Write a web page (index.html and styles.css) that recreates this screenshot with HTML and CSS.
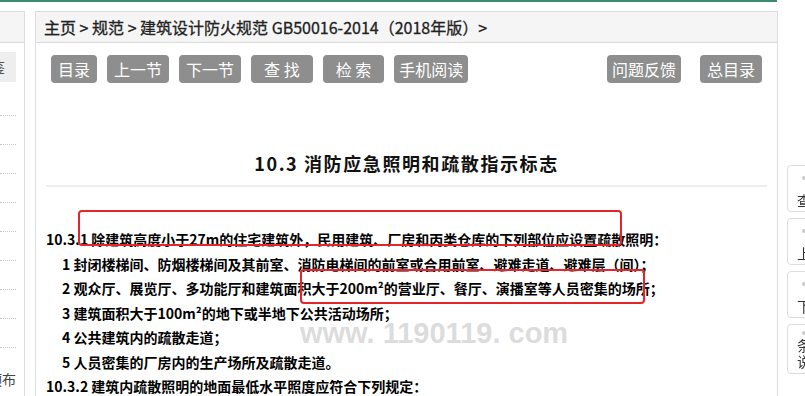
FILE: index.html
```
<!DOCTYPE html>
<html lang="zh-CN">
<head>
    <meta charset="UTF-8">
    <meta name="viewport" content="width=device-width, initial-scale=1.0">
    <title>10.3 消防应急照明和疏散指示标志</title>
    <link rel="stylesheet" href="styles.css">
</head>
<body>
    <div class="topline"></div>
    <div class="wrap">
        <aside class="side">
            <div class="side-head"></div>
            <div class="side-item active">鉴</div>
            <ul class="side-list">
                <li></li><li></li><li></li><li></li><li></li>
                <li></li><li></li><li></li><li></li>
                <li class="last"><span>颁布</span></li>
            </ul>
        </aside>

        <main class="main">
            <div class="crumb">主页 &gt; 规范 &gt; 建筑设计防火规范 GB50016-2014（2018年版）&gt;</div>

            <div class="toolbar">
                <a class="btn">目录</a>
                <a class="btn">上一节</a>
                <a class="btn">下一节</a>
                <a class="btn spaced">查 找</a>
                <a class="btn spaced">检 索</a>
                <a class="btn tight">手机阅读</a>
                <div class="toolbar-right">
                    <a class="btn tight">问题反馈</a>
                    <a class="btn">总目录</a>
                </div>
            </div>

            <div class="content">
                <h1 class="title">10.3 消防应急照明和疏散指示标志</h1>

                <div class="article">
                    <p>10.3.1 除建筑高度小于27m的住宅建筑外，民用建筑、厂房和丙类仓库的下列部位应设置疏散照明：</p>
                    <p class="sub">1 封闭楼梯间、防烟楼梯间及其前室、消防电梯间的前室或合用前室、避难走道、避难层（间）；</p>
                    <p class="sub">2 观众厅、展览厅、多功能厅和建筑面积大于200m²的营业厅、餐厅、演播室等人员密集的场所；</p>
                    <p class="sub">3 建筑面积大于100m²的地下或半地下公共活动场所；</p>
                    <p class="sub">4 公共建筑内的疏散走道；</p>
                    <p class="sub">5 人员密集的厂房内的生产场所及疏散走道。</p>
                    <p>10.3.2 建筑内疏散照明的地面最低水平照度应符合下列规定：</p>

                    <div class="mark mark-1"></div>
                    <div class="mark mark-2"></div>
                    <div class="watermark">www. 1190119. com</div>
                </div>
            </div>
        </main>
    </div>

    <div class="float-tabs">
        <div class="tab"><i></i>查找</div>
        <div class="tab"><i></i>上一节</div>
        <div class="tab"><i></i>下一节</div>
        <div class="tab two"><i></i>条文<br>说明</div>
    </div>
</body>
</html>
```

FILE: styles.css
```
body {
    margin: 0;
    background: #fff;
    font-family: "Noto Sans CJK SC", "Liberation Sans", sans-serif;
    color: #222;
    overflow: hidden;
}
.topline {
    width: 777px;
    height: 2px;
    background: #3d8b6f;
}
.wrap {
    display: flex;
    gap: 10px;
    margin-top: 9px;
}

/* left column, mostly scrolled off */
.side {
    width: 24px;
    height: 385px;
    border-top: 1px solid #ddd;
    border-right: 1px solid #ddd;
    flex-shrink: 0;
    overflow: hidden;
}
.side-head {
    height: 30px;
    background: #f5f5f5;
    border-bottom: 1px solid #ddd;
}
.side-item {
    margin-top: 9px;
    width: 16px;
    height: 30px;
    line-height: 30px;
    background: #eee;
    overflow: hidden;
    white-space: nowrap;
    text-indent: -10px;
    font-size: 15px;
    color: #555;
}
.side-list {
    list-style: none;
    margin: 0;
    padding: 5px 0 0;
    width: 16px;
}
.side-list li {
    height: 29px;
    border-bottom: 1px dotted #c8c8c8;
    box-sizing: border-box;
}
.side-list li.last {
    border-bottom: none;
    height: 40px;
    padding-top: 21px;
    text-indent: -12px;
    font-size: 14px;
    color: #444;
    white-space: nowrap;
    overflow: hidden;
}

/* main panel */
.main {
    width: 741px;
    border: 1px solid #ddd;
    border-bottom: none;
    flex-shrink: 0;
}
.crumb {
    height: 30px;
    line-height: 30px;
    padding-left: 8px;
    background: #f5f5f5;
    border-bottom: 1px solid #ddd;
    font-size: 16px;
    color: #222;
    white-space: nowrap;
    -webkit-text-stroke: 0.3px #222;
}
.toolbar {
    display: flex;
    gap: 10px;
    margin-top: 12px;
    padding: 0 15px;
}
.toolbar-right {
    display: flex;
    gap: 19px;
    margin-left: auto;
}
.btn {
    display: block;
    height: 28px;
    line-height: 28px;
    padding: 0 7px;
    background: #8e8e8e;
    color: #fff;
    font-size: 16px;
    border-radius: 4px;
    white-space: pre;
}
.btn.spaced {
    padding: 0 13px;
}
.btn.tight {
    padding: 0 5px;
}

.content {
    padding: 0 10px;
}
.title {
    margin: 68px 0 0;
    padding-bottom: 10px;
    border-bottom: 2px solid #eee;
    text-align: center;
    font-size: 18px;
    line-height: 24px;
    letter-spacing: 1.6px;
    color: #111;
}
.article {
    position: relative;
    margin-top: 40px;
    font-size: 14px;
    font-weight: bold;
    color: #000;
}
.article p {
    margin: 0;
    line-height: 24.5px;
    white-space: nowrap;
}
.article p.sub {
    padding-left: 16px;
}

/* red annotation boxes drawn over the text */
.mark {
    position: absolute;
    border: 2px solid #e4262a;
    border-radius: 4px;
}
.mark-1 {
    left: 32px;
    top: -17px;
    width: 540px;
    height: 32px;
}
.mark-2 {
    left: 254px;
    top: 42px;
    width: 341px;
    height: 31px;
}
.watermark {
    position: absolute;
    left: 254px;
    top: 90px;
    font-family: "Liberation Sans", sans-serif;
    font-size: 29px;
    color: rgba(190, 190, 190, 0.55);
    white-space: nowrap;
}

/* floating side tabs */
.float-tabs {
    position: fixed;
    left: 787px;
    top: 165px;
    display: flex;
    flex-direction: column;
    gap: 6px;
}
.tab {
    width: 40px;
    height: 47px;
    border: 1px solid #ddd;
    border-radius: 4px;
    background: #fff;
    box-sizing: border-box;
    font-size: 14px;
    line-height: 16px;
    color: #333;
    padding: 26px 0 0 9px;
    white-space: nowrap;
    overflow: hidden;
}
.tab i {
    display: block;
    width: 4px;
    height: 4px;
    margin: -16px 0 12px 5px;
    border-radius: 50%;
    background: #ccc;
}
.tab.two {
    padding-top: 14px;
    height: 50px;
}
.tab.two i {
    margin: -8px 0 2px 5px;
}
```
